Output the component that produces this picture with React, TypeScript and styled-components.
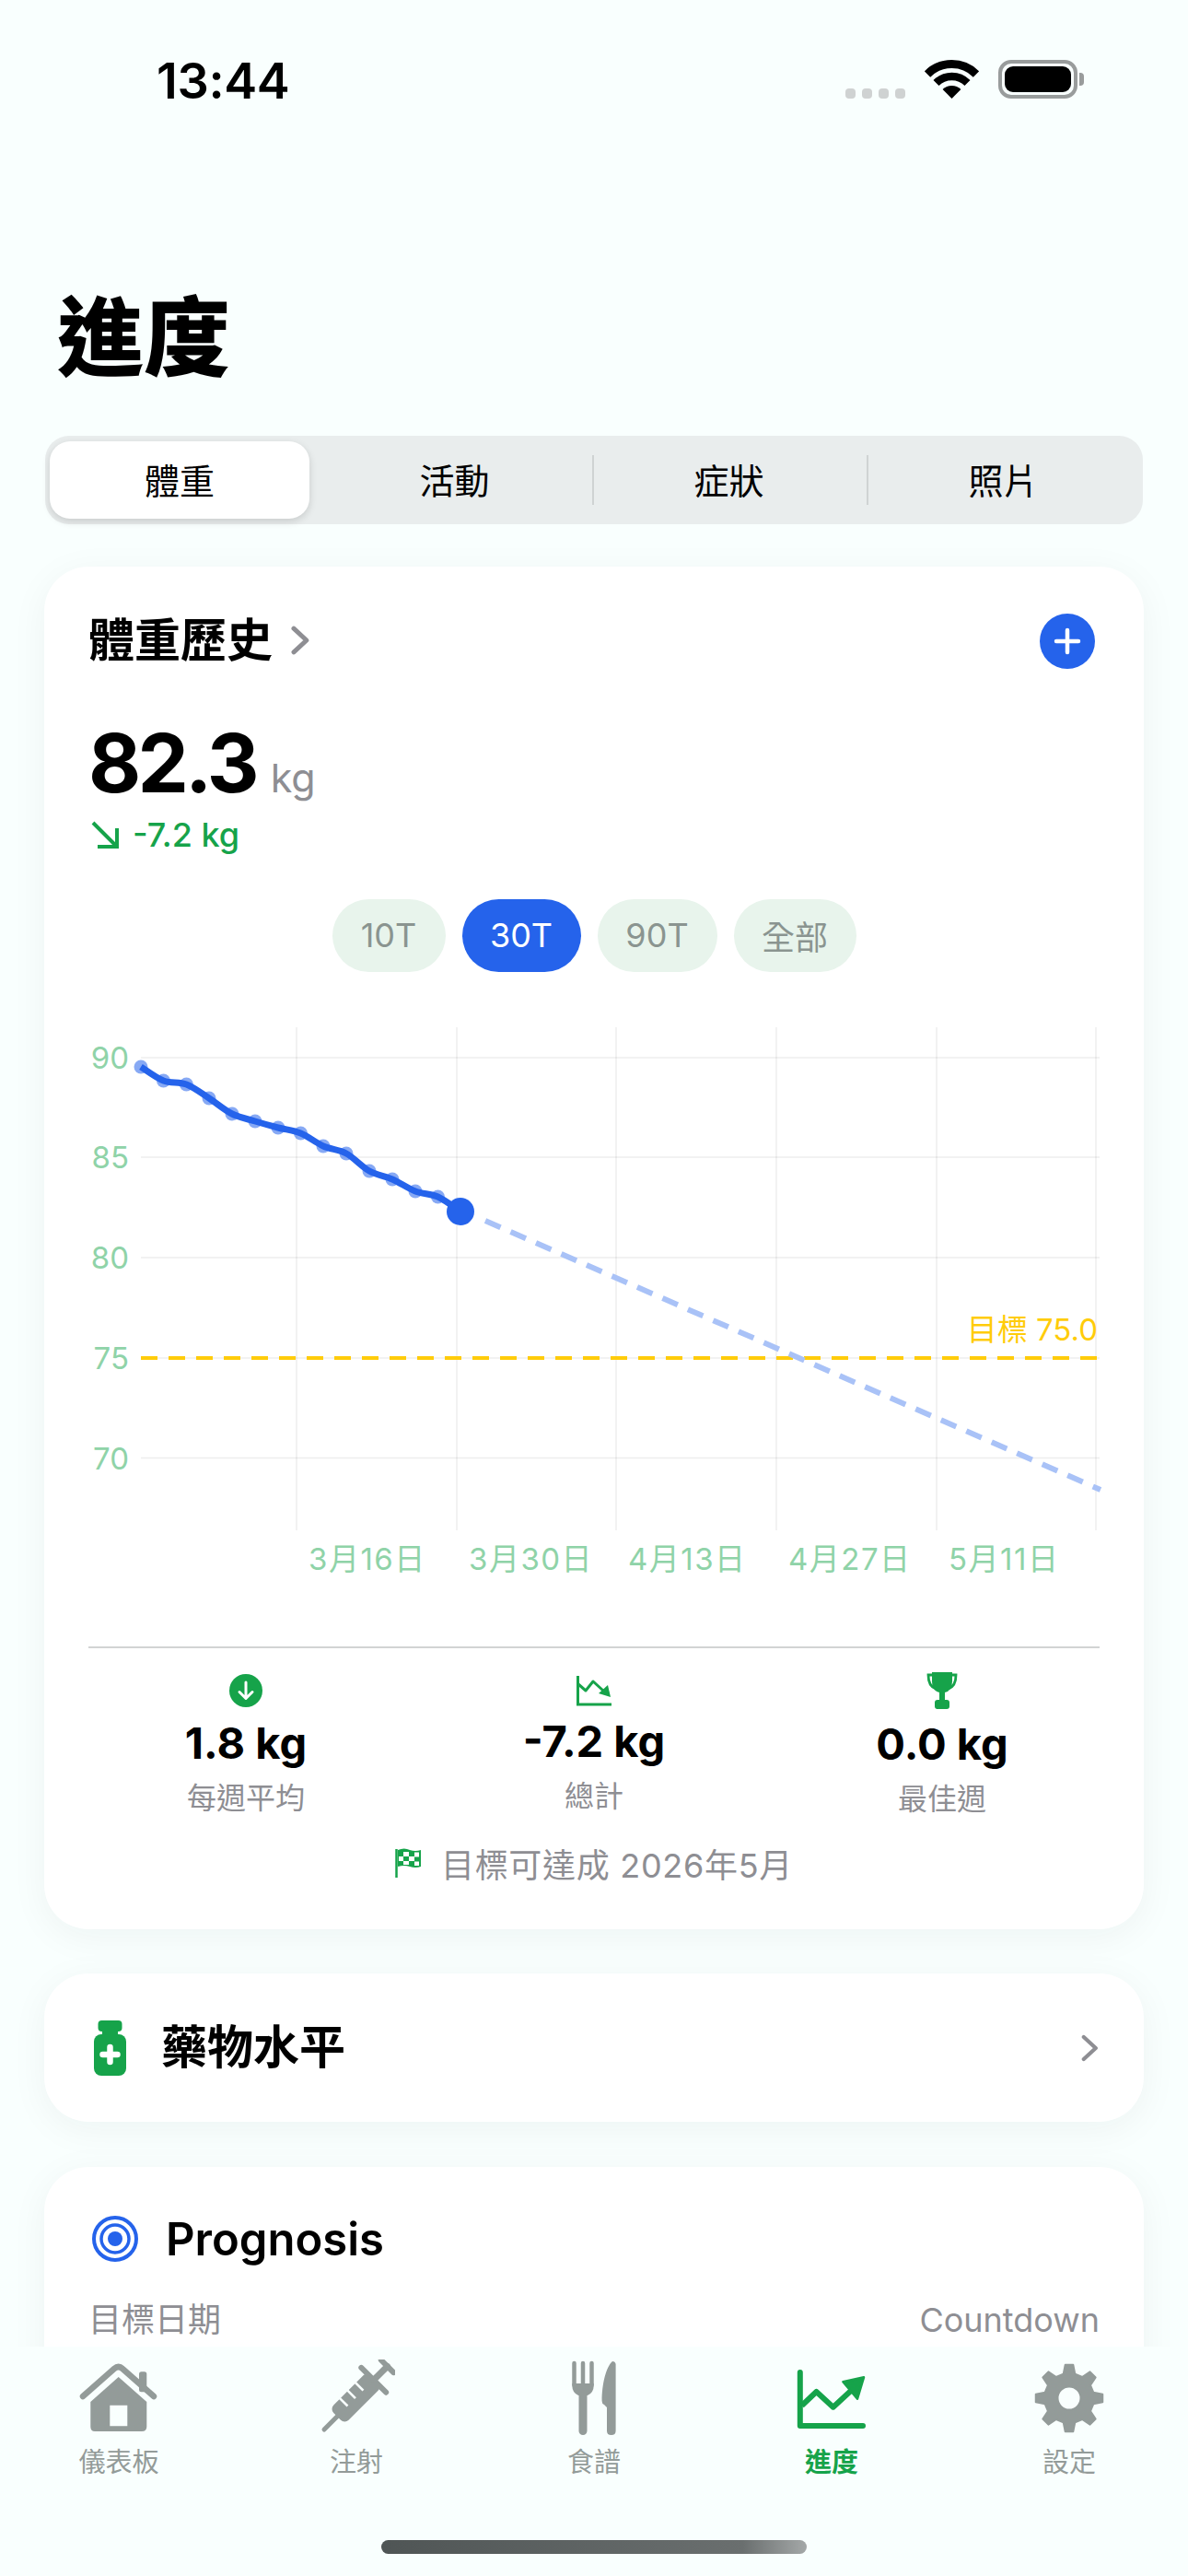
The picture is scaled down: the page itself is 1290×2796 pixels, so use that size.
import React from 'react'
import styled, { createGlobalStyle } from 'styled-components'

const BLUE = '#2563eb'
const GREEN = '#16a34a'
const GREY = '#8e8e93'
const TAB_GREY = '#939b99'

const GlobalStyle = createGlobalStyle`
	html, body {
		margin: 0;
		padding: 0;
		background: #f9fffe;
	}
	* {
		box-sizing: border-box;
	}
	body {
		font-family: Inter, 'Noto Sans CJK TC', sans-serif;
		color: #000;
	}
`

const Screen = styled.div`
	width: 1290px;
	height: 2796px;
	display: flex;
	flex-direction: column;
	overflow: hidden;
	background: #f9fffe;
`
const Content = styled.main`
	height: 2547px;
	flex: none;
	overflow: hidden;
	padding: 0 48px;
`
const StatusBar = styled.div`
	height: 130px;
	margin: 0 -48px;
	padding: 65px 113px 0 170px;
	display: flex;
	justify-content: space-between;
	align-items: flex-start;
`
const Time = styled.div`
	font-size: 54px;
	line-height: 46px;
	font-weight: 600;
	letter-spacing: -0.4px;
`
const StatusIcons = styled.div`
	display: flex;
	align-items: flex-end;
	gap: 21px;
	height: 42px;
`
const SignalDots = styled.div`
	display: flex;
	gap: 7px;
`
const SignalDot = styled.span`
	width: 11px;
	height: 11px;
	border-radius: 4px;
	background: #cfd2d2;
`
const Battery = styled.div`
	display: flex;
	align-items: center;
	gap: 2px;
`
const BatteryBody = styled.div`
	width: 86px;
	height: 42px;
	border: 4px solid #999c9c;
	border-radius: 14px;
	padding: 3px;
`
const BatteryFill = styled.div`
	width: 100%;
	height: 100%;
	background: #000;
	border-radius: 9px;
`
const BatteryNub = styled.div`
	width: 5px;
	height: 14px;
	background: #999c9c;
	border-radius: 0 4px 4px 0;
`
const Title = styled.h1`
	margin: 182px 0 51px 14px;
	font-size: 94px;
	line-height: 110px;
	font-weight: 900;
`
const Segments = styled.div`
	height: 96px;
	margin-left: 1px;
	width: 1192px;
	display: grid;
	grid-template-columns: repeat(4, 298px);
	background: #e9eded;
	border-radius: 26px;
`
const Segment = styled.div<{ $active?: boolean; $divider?: boolean }>`
	position: relative;
	display: flex;
	align-items: center;
	justify-content: center;
	font-size: 38px;
	border-radius: 22px;
	padding: ${p => (p.$active ? '0 0 4px' : '0 5px 4px 0')};
	margin: ${p => (p.$active ? '6px 11px 6px 5px' : '0')};
	background: ${p => (p.$active ? '#fff' : 'transparent')};
	box-shadow: ${p => (p.$active ? '0 3px 8px rgba(0, 0, 0, 0.14)' : 'none')};
	&::before {
		content: '';
		display: ${p => (p.$divider ? 'block' : 'none')};
		position: absolute;
		left: -2px;
		top: 21px;
		width: 2px;
		height: 54px;
		background: #cfd3d3;
	}
`
const Card = styled.section`
	background: #fff;
	border-radius: 48px;
	box-shadow: 0 8px 40px rgba(0, 40, 40, 0.05);
`
const WeightCard = styled(Card)`
	margin-top: 46px;
	padding: 48px 48px 50px;
`
const CardHeader = styled.div`
	height: 66px;
	display: flex;
	align-items: center;
	justify-content: space-between;
`
const HeaderLink = styled.div`
	display: flex;
	align-items: center;
	gap: 20px;
	font-size: 50px;
	line-height: 66px;
	font-weight: 600;
	padding-bottom: 2px;
`
const PlusButton = styled.div`
	width: 60px;
	height: 60px;
	margin-right: 5px;
	border-radius: 50%;
	background: ${BLUE};
	display: flex;
	align-items: center;
	justify-content: center;
`
const ValueRow = styled.div`
	margin-top: 49px;
	height: 100px;
	display: flex;
	align-items: baseline;
	gap: 16px;
`
const BigValue = styled.span`
	font-size: 88px;
	line-height: 100px;
	font-weight: 700;
	letter-spacing: -3.8px;
`
const Unit = styled.span`
	font-size: 43px;
	line-height: 50px;
	color: ${GREY};
`
const Change = styled.div`
	margin-top: 6px;
	height: 44px;
	display: flex;
	align-items: center;
	gap: 15px;
	color: ${GREEN};
	font-size: 36px;
	font-weight: 500;
	padding-left: 3px;
`
const Pills = styled.div`
	margin-top: 48px;
	display: flex;
	justify-content: center;
	gap: 18px;
`
const Pill = styled.div<{ $active?: boolean; $width: number }>`
	width: ${p => p.$width}px;
	height: 79px;
	border-radius: 40px;
	display: flex;
	align-items: center;
	justify-content: center;
	font-size: 36px;
	padding-bottom: 1px;
	background: ${p => (p.$active ? BLUE : '#e8f4ec')};
	color: ${p => (p.$active ? '#fff' : '#8a9490')};
`
const Chart = styled.svg`
	display: block;
	margin-top: 45px;
	overflow: visible;
	text {
		font-family: Inter, 'Noto Sans CJK TC', sans-serif;
		font-size: 33px;
	}
`
const DateLabel = styled.text`
	letter-spacing: 1.5px;
`
const Divider = styled.div`
	margin-top: 67px;
	height: 2px;
	background: #d2d4d4;
`
const Stats = styled.div`
	margin: 28px -18px 0;
	display: grid;
	grid-template-columns: repeat(3, 1fr);
`
const Stat = styled.div`
	display: flex;
	flex-direction: column;
	align-items: center;
`
const StatIcon = styled.div`
	height: 36px;
	display: flex;
	align-items: center;
	justify-content: center;
`
const StatValue = styled.div<{ $offset: number }>`
	margin-top: ${p => 13 + p.$offset}px;
	font-size: 47px;
	line-height: 52px;
	font-weight: 700;
`
const StatLabel = styled.div`
	margin-top: 12px;
	font-size: 32px;
	line-height: 44px;
	color: ${GREY};
`
const GoalNote = styled.div`
	margin-top: 25px;
	height: 44px;
	display: flex;
	align-items: center;
	justify-content: center;
	gap: 21px;
	font-size: 36px;
	letter-spacing: 0.7px;
	color: ${GREY};
`
const MedicationCard = styled(Card)`
	margin-top: 48px;
	height: 161px;
	padding: 0 49px 0 54px;
	display: flex;
	align-items: center;
	justify-content: space-between;
`
const MedicationName = styled.div`
	display: flex;
	align-items: center;
	gap: 38px;
	font-size: 50px;
	line-height: 66px;
	font-weight: 600;
`
const MedicationLabel = styled.span`
	padding-bottom: 2px;
`
const PrognosisCard = styled(Card)`
	margin-top: 49px;
	padding: 48px 48px 80px;
`
const PrognosisHeader = styled.div`
	height: 60px;
	display: flex;
	align-items: center;
	gap: 30px;
	padding-left: 4px;
	font-size: 49px;
	font-weight: 600;
`
const PrognosisRow = styled.div`
	margin-top: 36px;
	display: flex;
	justify-content: space-between;
	font-size: 36px;
	line-height: 44px;
	color: ${GREY};
`
const TabBar = styled.nav`
	flex: 1;
	display: flex;
	flex-direction: column;
	align-items: center;
	background: #f9fffe;
`
const Tabs = styled.div`
	width: 100%;
	padding-top: 14px;
	display: grid;
	grid-template-columns: repeat(5, 1fr);
`
const Tab = styled.div<{ $active?: boolean }>`
	display: flex;
	flex-direction: column;
	align-items: center;
	color: ${p => (p.$active ? GREEN : TAB_GREY)};
	font-size: 29px;
	line-height: 36px;
	font-weight: ${p => (p.$active ? 600 : 400)};
`
const TabIcon = styled.div`
	height: 84px;
	margin-bottom: 10px;
	display: flex;
	align-items: center;
	justify-content: center;
`
const HomeBar = styled.div`
	margin-top: 66px;
	width: 462px;
	height: 15px;
	border-radius: 8px;
	background: linear-gradient(90deg, #4f5555 0%, #6a6f6f 85%, #a4a8a8 100%);
`

const weights: [number, number][] = [
	[153, 1158], [177.5, 1173], [202.4, 1177], [227, 1192], [252, 1209],
	[277, 1217], [302, 1224], [326.5, 1230], [351, 1244], [376, 1252],
	[401, 1271], [426, 1280], [451, 1293], [475.5, 1299], [500, 1315],
]

// catmull-rom through the weigh-ins
const smoothPath = (pts: [number, number][]) => {
	let d = `M${pts[0][0]} ${pts[0][1]}`
	for (let i = 0; i < pts.length - 1; i++) {
		const p0 = pts[Math.max(i - 1, 0)]
		const p1 = pts[i]
		const p2 = pts[i + 1]
		const p3 = pts[Math.min(i + 2, pts.length - 1)]
		const c1x = p1[0] + (p2[0] - p0[0]) / 6
		const c1y = p1[1] + (p2[1] - p0[1]) / 6
		const c2x = p2[0] - (p3[0] - p1[0]) / 6
		const c2y = p2[1] - (p3[1] - p1[1]) / 6
		d += ` C${c1x} ${c1y} ${c2x} ${c2y} ${p2[0]} ${p2[1]}`
	}
	return d
}

const gearPath = () => {
	const cx = 38
	const cy = 38
	const teeth = 8
	const pts: string[] = []
	for (let i = 0; i < teeth; i++) {
		const a = (i * 2 * Math.PI) / teeth - Math.PI / 2
		const step = (2 * Math.PI) / teeth
		const corners: [number, number][] = [
			[a - step * 0.3, 27],
			[a - step * 0.15, 36.5],
			[a + step * 0.15, 36.5],
			[a + step * 0.3, 27],
		]
		corners.forEach(([ang, r]) => {
			pts.push(`${(cx + r * Math.cos(ang)).toFixed(2)} ${(cy + r * Math.sin(ang)).toFixed(2)}`)
		})
	}
	return `M${pts.join(' L')} Z M${cx + 12.5} ${cy} A12.5 12.5 0 1 0 ${cx - 12.5} ${cy} A12.5 12.5 0 1 0 ${cx + 12.5} ${cy} Z`
}

const Chevron = ({ height, stroke = 4.5 }: { height: number; stroke?: number }) => (
	<svg width={height * 0.62} height={height} viewBox="0 0 20 32" fill="none">
		<path d="M3 3 L17 16 L3 29" stroke={GREY} strokeWidth={stroke} strokeLinecap="round" strokeLinejoin="round" />
	</svg>
)

const WifiIcon = () => (
	<svg width="59" height="42" viewBox="0 0 59 42" fill="none">
		<path d="M3 15.5 A37.5 37.5 0 0 1 56 15.5" stroke="#000" strokeWidth="9" />
		<path d="M12.5 25 A24 24 0 0 1 46.5 25" stroke="#000" strokeWidth="8.5" />
		<path d="M29.5 42 L19.6 32.1 A14 14 0 0 1 39.4 32.1 Z" fill="#000" />
	</svg>
)

const WeightChart = () => {
	const gridX = [322, 496, 669, 843, 1017, 1190]
	const gridY = [1148, 1256, 1365, 1474, 1582.5]
	const yLabels = ['90', '85', '80', '75', '70']
	const xLabels = ['3月16日', '3月30日', '4月13日', '4月27日', '5月11日']
	return (
		<Chart width="1097" height="620" viewBox="96 1100 1097 620" fill="none">
			{gridX.map(x => (
				<line key={x} x1={x} x2={x} y1="1115" y2="1661" stroke="#000" strokeOpacity="0.07" strokeWidth="1.5" />
			))}
			{gridY.map(y => (
				<line key={y} x1="153" x2="1194" y1={y} y2={y} stroke="#000" strokeOpacity="0.07" strokeWidth="1.5" />
			))}
			{yLabels.map((label, i) => (
				<text key={label} x="140" y={gridY[i] + 12} textAnchor="end" fill="#8fd3a8">
					{label}
				</text>
			))}
			{xLabels.map((label, i) => (
				<DateLabel key={label} x={gridX[i] + 13} y="1704" fill="#8fd3a8">
					{label}
				</DateLabel>
			))}
			<line x1="153" x2="1192" y1="1474" y2="1474" stroke="#ffcc0a" strokeWidth="4" strokeDasharray="18 12" />
			<text x="1192" y="1455" textAnchor="end" fill="#ffcc0a">
				目標 75.0
			</text>
			<line x1="527" y1="1325" x2="1195" y2="1617" stroke="#a9c2f7" strokeWidth="6" strokeDasharray="18 12" />
			{weights.slice(0, -1).map(([x, y]) => (
				<circle key={x} cx={x} cy={y} r="7.5" fill={BLUE} fillOpacity="0.55" />
			))}
			<path d={smoothPath(weights)} stroke={BLUE} strokeWidth="7" />
			<circle cx="500" cy="1315" r="15" fill={BLUE} />
		</Chart>
	)
}

const HomeIcon = () => (
	<svg width="88" height="78" viewBox="15 14 88 78" fill={TAB_GREY}>
		<rect x="81" y="24.3" width="8.3" height="22" rx="2.5" />
		<path d="M20 51 L54 21 Q58.7 17 63 21 L97 51" fill="none" stroke={TAB_GREY} strokeWidth="6.5" strokeLinecap="round" strokeLinejoin="round" />
		<path
			fillRule="evenodd"
			d="M58.7 30 L89.3 57 V84 Q89.3 89 84 89 H33 Q28.3 89 28.3 84 V57 Z M49.3 60.7 V83.3 H68.3 V60.7 Z"
		/>
	</svg>
)

const SyringeIcon = () => (
	<svg width="84" height="84" viewBox="272 14 84 84" fill="none">
		<g transform="translate(279 90) rotate(-45)" strokeLinecap="round">
			<line x1="0" y1="0" x2="24" y2="0" stroke={TAB_GREY} strokeWidth="5" />
			<rect x="20" y="-11.5" width="58" height="23" rx="6" fill={TAB_GREY} />
			<line x1="76" y1="-19" x2="76" y2="19" stroke={TAB_GREY} strokeWidth="6" />
			<line x1="76" y1="0" x2="97" y2="0" stroke={TAB_GREY} strokeWidth="7" />
			<line x1="97" y1="-9.5" x2="97" y2="9.5" stroke={TAB_GREY} strokeWidth="6" />
			<line x1="36" y1="-12" x2="36" y2="0" stroke="#f9fffe" strokeWidth="2.6" strokeLinecap="butt" />
			<line x1="48" y1="-12" x2="48" y2="0" stroke="#f9fffe" strokeWidth="2.6" strokeLinecap="butt" />
			<line x1="60" y1="-12" x2="60" y2="0" stroke="#f9fffe" strokeWidth="2.6" strokeLinecap="butt" />
		</g>
	</svg>
)

const CutleryIcon = () => (
	<svg width="52" height="84" viewBox="618 2558 52 84" fill="none">
		<g stroke={TAB_GREY} strokeLinecap="round">
			<line x1="622.5" y1="2562" x2="622.5" y2="2586" strokeWidth="4.5" />
			<line x1="632" y1="2562" x2="632" y2="2586" strokeWidth="4.5" />
			<line x1="641.5" y1="2562" x2="641.5" y2="2586" strokeWidth="4.5" />
			<line x1="632" y1="2596" x2="632" y2="2635.5" strokeWidth="9" />
		</g>
		<path d="M620.3 2584 H643.7 V2586 Q643.7 2594 637 2597 H627 Q620.3 2594 620.3 2586 Z" fill={TAB_GREY} />
		<path
			d="M667.6 2563 Q667 2560 664 2560 C657 2566 652.6 2585 652.6 2603 Q652.6 2606 655 2607 L658 2610 V2635.5 Q658 2640 662.8 2640 Q667.6 2640 667.6 2635.5 Z"
			fill={TAB_GREY}
		/>
	</svg>
)

const ProgressIcon = () => (
	<svg width="84" height="75" viewBox="860 2565 84 75" fill="none">
		<path d="M867.8 2574 V2632 H936" stroke={GREEN} strokeWidth="6" strokeLinecap="round" strokeLinejoin="round" />
		<path d="M869.7 2610 L885.5 2595 L903.7 2611.7 L924 2593" stroke={GREEN} strokeWidth="6" strokeLinejoin="round" />
		<path d="M914.4 2584.3 L937 2579.3 L930 2602.7 Z" fill={GREEN} stroke={GREEN} strokeWidth="2.5" strokeLinejoin="round" />
	</svg>
)

const GearIcon = () => (
	<svg width="76" height="76" viewBox="0 0 76 76">
		<path d={gearPath()} fill={TAB_GREY} fillRule="evenodd" stroke={TAB_GREY} strokeWidth="2" strokeLinejoin="round" />
	</svg>
)

const DownCircle = () => (
	<svg width="36" height="36" viewBox="0 0 36 36" fill="none">
		<circle cx="18" cy="18" r="18" fill={GREEN} />
		<path d="M18 9 V26 M11 19.5 L18 26.5 L25 19.5" stroke="#fff" strokeWidth="3" strokeLinecap="round" strokeLinejoin="round" />
	</svg>
)

const TrendDown = () => (
	<svg width="38" height="34" viewBox="0 0 38 34" fill="none">
		<path d="M1.5 1 V32 H38" stroke={GREEN} strokeWidth="3" />
		<path d="M2 10 L10 17 L18 7 L29 17" stroke={GREEN} strokeWidth="3" strokeLinejoin="round" />
		<path d="M24 20 L37 24 L34 11 Z" fill={GREEN} />
	</svg>
)

const Trophy = () => (
	<svg width="36" height="40" viewBox="0 0 36 40" fill="none">
		<path d="M8 3 H3 Q3 15 11 18 M28 3 H33 Q33 15 25 18" stroke={GREEN} strokeWidth="2.8" />
		<path d="M7 0 H29 V10 Q29 20 21 22 V30 H15 V22 Q7 20 7 10 Z" fill={GREEN} />
		<rect x="10" y="30" width="16" height="10" rx="3" fill={GREEN} />
	</svg>
)

const CheckeredFlag = () => (
	<svg width="29" height="32" viewBox="0 0 29 32" fill="none">
		<line x1="1.5" y1="1" x2="1.5" y2="32" stroke={GREEN} strokeWidth="2.5" />
		<path d="M3 2 Q10 -1 16 2 Q22 4 28 2 V20 Q22 22 16 20 Q10 18 3 20 Z" fill={GREEN} />
		<g fill="#fff">
			<rect x="9" y="4" width="6" height="5" />
			<rect x="21" y="4.5" width="5" height="5" />
			<rect x="4" y="9" width="5" height="5" />
			<rect x="15" y="9" width="6" height="5" />
			<rect x="9" y="14" width="6" height="4" />
			<rect x="21" y="14.5" width="5" height="4.5" />
		</g>
	</svg>
)

const Vial = () => (
	<svg width="35" height="60" viewBox="0 0 35 60" fill="none">
		<rect x="4.5" y="0" width="26" height="12" rx="4" fill={GREEN} />
		<rect x="9" y="10" width="17" height="8" fill={GREEN} />
		<rect x="0" y="15" width="35" height="45" rx="8" fill={GREEN} />
		<path d="M17.5 29 V45 M9.5 37 H25.5" stroke="#fff" strokeWidth="6.5" strokeLinecap="round" />
	</svg>
)

const Target = () => (
	<svg width="50" height="50" viewBox="0 0 50 50" fill="none">
		<circle cx="25" cy="25" r="23" stroke={BLUE} strokeWidth="4" />
		<circle cx="25" cy="25" r="15" stroke={BLUE} strokeWidth="3.5" />
		<circle cx="25" cy="25" r="8" fill={BLUE} />
	</svg>
)

const stats = [
	{ icon: <DownCircle />, value: '1.8 kg', label: '每週平均', offset: 0 },
	{ icon: <TrendDown />, value: '-7.2 kg', label: '總計', offset: -2 },
	{ icon: <Trophy />, value: '0.0 kg', label: '最佳週', offset: 1 },
]

const tabs = [
	{ icon: <HomeIcon />, label: '儀表板' },
	{ icon: <SyringeIcon />, label: '注射' },
	{ icon: <CutleryIcon />, label: '食譜' },
	{ icon: <ProgressIcon />, label: '進度', active: true },
	{ icon: <GearIcon />, label: '設定' },
]

const App: React.FC = () => {
	return (
		<Screen>
			<GlobalStyle />
			<Content>
				<StatusBar>
					<Time>13:44</Time>
					<StatusIcons>
						<SignalDots>
							<SignalDot />
							<SignalDot />
							<SignalDot />
							<SignalDot />
						</SignalDots>
						<WifiIcon />
						<Battery>
							<BatteryBody>
								<BatteryFill />
							</BatteryBody>
							<BatteryNub />
						</Battery>
					</StatusIcons>
				</StatusBar>
				<Title>進度</Title>
				<Segments>
					<Segment $active>體重</Segment>
					<Segment>活動</Segment>
					<Segment $divider>症狀</Segment>
					<Segment $divider>照片</Segment>
				</Segments>
				<WeightCard>
					<CardHeader>
						<HeaderLink>
							體重歷史
							<Chevron height={32} stroke={5} />
						</HeaderLink>
						<PlusButton>
							<svg width="32" height="32" viewBox="0 0 32 32">
								<path d="M16 4 V28 M4 16 H28" stroke="#fff" strokeWidth="4.5" strokeLinecap="round" />
							</svg>
						</PlusButton>
					</CardHeader>
					<ValueRow>
						<BigValue>82.3</BigValue>
						<Unit>kg</Unit>
					</ValueRow>
					<Change>
						<svg width="30" height="30" viewBox="0 0 30 30" fill="none">
							<path d="M2 2 L28 28 M28 8 V28 H7" stroke={GREEN} strokeWidth="4" />
						</svg>
						-7.2 kg
					</Change>
					<Pills>
						<Pill $width={123}>10T</Pill>
						<Pill $width={129} $active>
							30T
						</Pill>
						<Pill $width={130}>90T</Pill>
						<Pill $width={133}>全部</Pill>
					</Pills>
					<WeightChart />
					<Divider />
					<Stats>
						{stats.map(stat => (
							<Stat key={stat.label}>
								<StatIcon>{stat.icon}</StatIcon>
								<StatValue $offset={stat.offset}>{stat.value}</StatValue>
								<StatLabel>{stat.label}</StatLabel>
							</Stat>
						))}
					</Stats>
					<GoalNote>
						<CheckeredFlag />
						目標可達成 2026年5月
					</GoalNote>
				</WeightCard>
				<MedicationCard>
					<MedicationName>
						<Vial />
						<MedicationLabel>藥物水平</MedicationLabel>
					</MedicationName>
					<Chevron height={30} />
				</MedicationCard>
				<PrognosisCard>
					<PrognosisHeader>
						<Target />
						Prognosis
					</PrognosisHeader>
					<PrognosisRow>
						<span>目標日期</span>
						<span>Countdown</span>
					</PrognosisRow>
				</PrognosisCard>
			</Content>
			<TabBar>
				<Tabs>
					{tabs.map(tab => (
						<Tab key={tab.label} $active={tab.active}>
							<TabIcon>{tab.icon}</TabIcon>
							{tab.label}
						</Tab>
					))}
				</Tabs>
				<HomeBar />
			</TabBar>
		</Screen>
	)
}

export default App
